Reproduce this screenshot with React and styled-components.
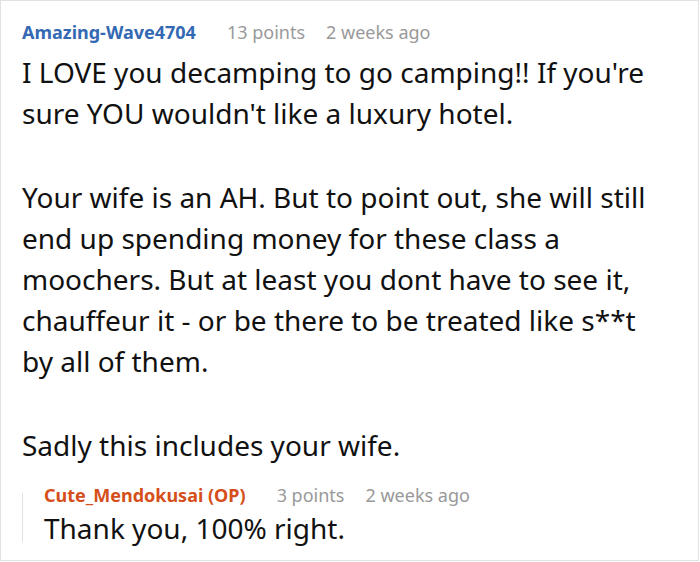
import React from 'react';
import styled, { createGlobalStyle } from 'styled-components';

const GlobalStyle = createGlobalStyle`
  html, body {
    margin: 0;
    padding: 0;
    background: #fff;
  }
  body {
    font-family: "Noto Sans", "Open Sans", sans-serif;
  }
`

const ScCard = styled.div`
  box-sizing: border-box;
  width: 699px;
  height: 561px;
  border: 1px solid #e2e2e2;
  padding: 18px 36px 0 21px;
  overflow: hidden;
`

const ScHeader = styled.div`
  display: flex;
  align-items: center;
  gap: 21px;
  font-size: 18px;
  line-height: 26px;
  height: 26px;
`

const ScAuthor = styled.span`
  font-weight: 700;
  margin-right: 10px;
  color: ${p => (p.$op ? '#d54f1a' : '#3469b4')};
`

const ScMeta = styled.span`
  color: #999;
`

const ScBody = styled.div`
  margin-top: 7px;
  font-size: 28px;
  line-height: 41px;
  color: #111;

  & > p {
    margin: 0 0 43px;
  }
  & > p:last-child {
    margin-bottom: 0;
  }
`

const ScReply = styled.div`
  position: relative;
  margin-top: 16px;
  padding-left: 22px;

  &::before {
    content: '';
    position: absolute;
    left: 0;
    top: 11px;
    bottom: 7px;
    width: 1px;
    background: #e2e2e2;
  }
`

const ScReplyBody = styled(ScBody)`
  margin-top: 0;
`

const Comment = ({ author, op, points, age, children }) => (
  <>
    <ScHeader>
      <ScAuthor $op={op}>{author}</ScAuthor>
      <ScMeta>{points} points</ScMeta>
      <ScMeta>{age}</ScMeta>
    </ScHeader>
    {children}
  </>
)

const App = () => {
  return (
    <>
      <GlobalStyle />
      <ScCard>
        <Comment author="Amazing-Wave4704" points={13} age="2 weeks ago">
          <ScBody>
            <p>I LOVE you decamping to go camping!! If you're sure YOU wouldn't like a luxury hotel.</p>
            <p>Your wife is an AH. But to point out, she will still end up spending money for these class a moochers. But at least you dont have to see it, chauffeur it - or be there to be treated like s**t by all of them.</p>
            <p>Sadly this includes your wife.</p>
          </ScBody>
        </Comment>
        <ScReply>
          <Comment author="Cute_Mendokusai (OP)" op points={3} age="2 weeks ago">
            <ScReplyBody>
              <p>Thank you, 100% right.</p>
            </ScReplyBody>
          </Comment>
        </ScReply>
      </ScCard>
    </>
  )
}

export default App;
